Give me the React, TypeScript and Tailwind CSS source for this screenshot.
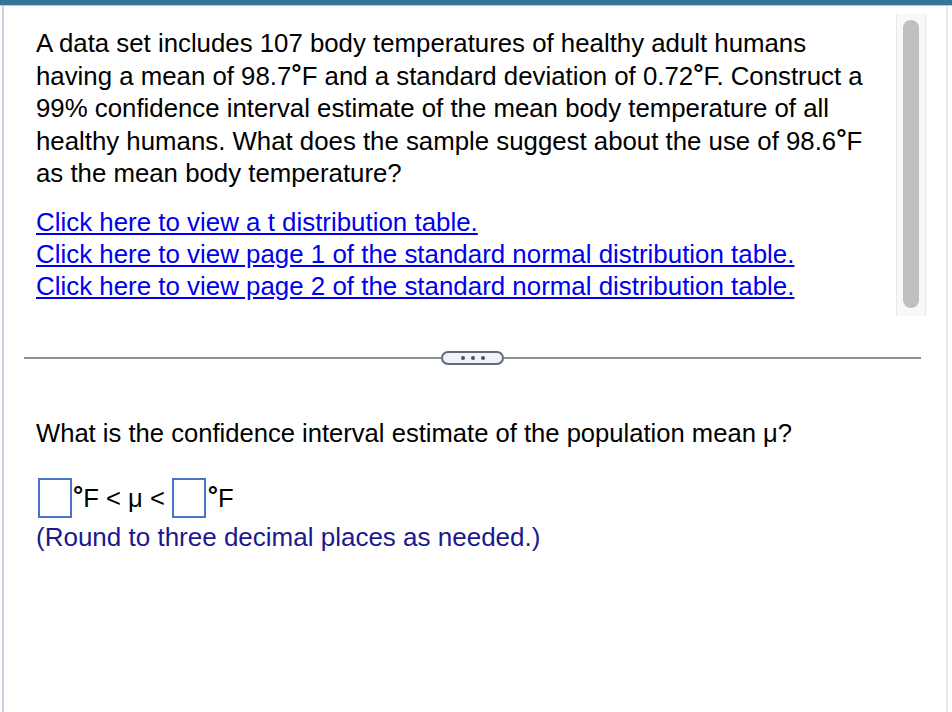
import React from "react";

function Box() {
  return <span className="inline-block w-[34px] h-[40px] border-2 border-[#4a74c9] bg-white" />;
}

function Deg() {
  return <span className="relative top-[-3px] font-bold">°</span>;
}

export default function App() {
  const font = { fontFamily: '"Liberation Sans", Arial, sans-serif' };
  return (
    <div className="w-[952px] h-[712px] bg-white flex flex-col overflow-hidden" style={font}>
      <div className="h-[5px] bg-[#337698]" />
      <div className="h-[1px] bg-[#b9c9d9]" />
      <div className="flex-1 flex">
        <div className="w-[2px] ml-[2px] bg-[#cdd2e0]" />
        <div className="flex-1 flex flex-col">
          <div className="flex">
            <div className="flex-1 pl-[32px] pt-[21px] h-[345px]">
              <p className="w-[849px] text-[25.8px] leading-[32.5px] text-black">
                A data set includes 107 body temperatures of healthy adult humans having a mean of 98.7<Deg />F and a standard deviation of 0.72<Deg />F. Construct a 99% confidence interval estimate of the mean body temperature of all healthy humans. What does the sample suggest about the use of 98.6<Deg />F as the mean body temperature?
              </p>
              <div className="mt-[16px] flex flex-col text-[25.9px] leading-[32px] text-[#0000ee]">
                <a className="underline self-start">Click here to view a t distribution table.</a>
                <a className="underline self-start">Click here to view page 1 of the standard normal distribution table.</a>
                <a className="underline self-start">Click here to view page 2 of the standard normal distribution table.</a>
              </div>
            </div>
            <div className="w-[30px] mr-[20px] mt-[8px] h-[302px] bg-[#f8f8f8] border-x border-[#e8e8e8] flex justify-center pt-[6px]">
              <div className="w-[16px] h-[288px] rounded-full bg-[#bfbfbf]" />
            </div>
          </div>
          <div className="flex items-center pl-[20px] pr-[25px] h-[14px]">
            <div className="flex-1 h-[2px] bg-[#8a909e]" />
            <div className="w-[63px] h-[14px] rounded-full border-2 border-[#5f6b7a] bg-[#f0f2f5] flex items-center justify-center gap-[6px]">
              <span className="w-[4px] h-[4px] rounded-full bg-[#4a5260]" />
              <span className="w-[4px] h-[4px] rounded-full bg-[#4a5260]" />
              <span className="w-[4px] h-[4px] rounded-full bg-[#4a5260]" />
            </div>
            <div className="flex-1 h-[2px] bg-[#8a909e]" />
          </div>
          <div className="pl-[32px] pt-[52px]">
            <p className="text-[25.6px] leading-[32px] text-black">What is the confidence interval estimate of the population mean μ?</p>
            <div className="mt-[29px] ml-[2px] flex items-center h-[40px] text-[25.6px] text-black">
              <Box />
              <span className="ml-[1px]"><Deg />F &lt; μ &lt;</span>
              <span className="ml-[7px] flex"><Box /></span>
              <span className="ml-[2px]"><Deg />F</span>
            </div>
            <p className="text-[26px] leading-[32px] text-[#1a1a8c] mt-[3px]">(Round to three decimal places as needed.)</p>
          </div>
        </div>
        <div className="w-[2px] mr-[4px] bg-[#ebebeb]" />
      </div>
    </div>
  );
}
